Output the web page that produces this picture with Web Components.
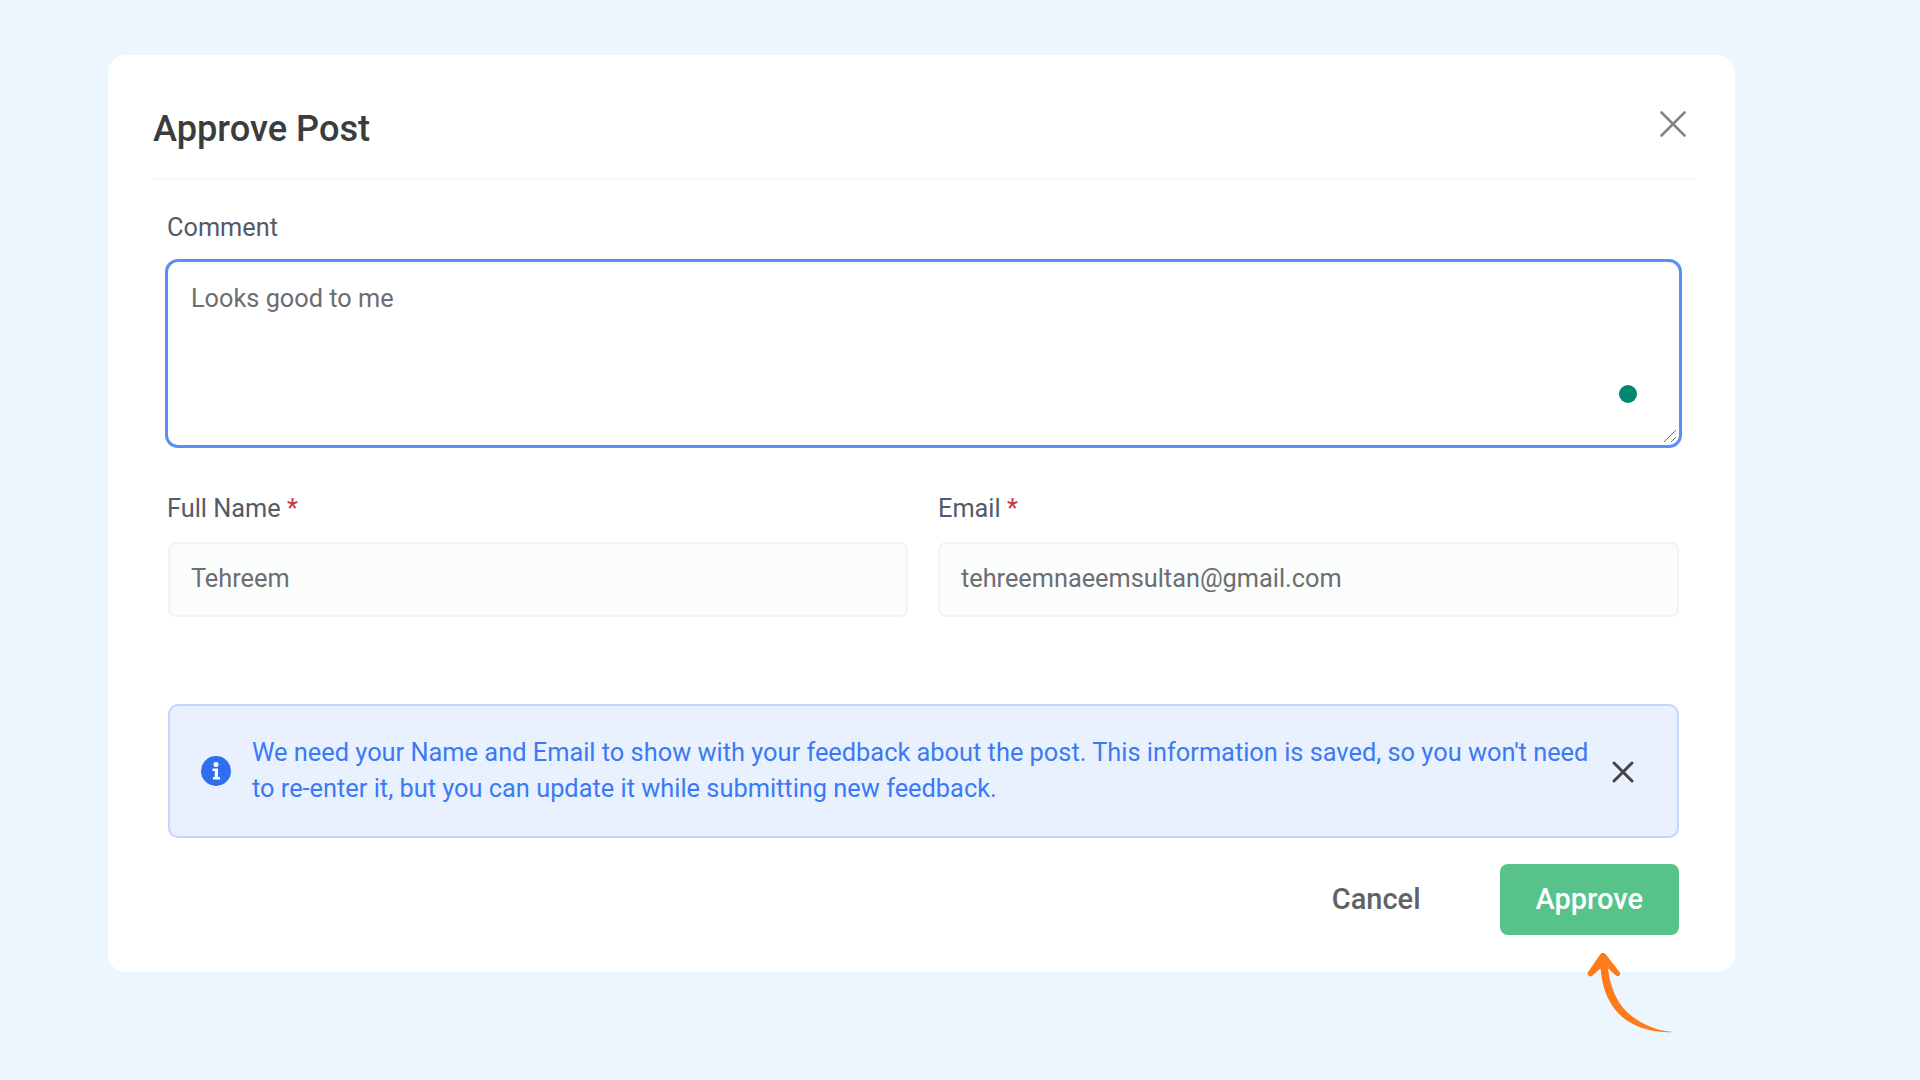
<!DOCTYPE html>
<html lang="en">
<head>
<meta charset="utf-8">
<title>Approve Post</title>
<style>
html, body { margin: 0; height: 100%; }
body { background: #edf5fe; font-family: Roboto, "Liberation Sans", sans-serif; overflow: hidden; }
</style>
</head>
<body>
<approve-page>
  <approve-modal heading="Approve Post">
    <comment-box label="Comment">Looks good to me</comment-box>
    <div slot="fields">
      <text-field label="Full Name" required>Tehreem</text-field>
      <text-field label="Email" required>tehreemnaeemsultan@gmail.com</text-field>
    </div>
    <info-alert slot="alert">We need your Name and Email to show with your feedback about the post. This information is saved, so you won't need to re-enter it, but you can update it while submitting new feedback.</info-alert>
    <action-button slot="actions">Cancel</action-button>
    <action-button slot="actions" primary>Approve</action-button>
  </approve-modal>
</approve-page>

<script>
'use strict';

(function() {

class ApprovePageElement extends HTMLElement {
  constructor() {
    super();
    const root = this.attachShadow({mode: 'open'});
    root.innerHTML = `
<style>
:host {
  display: block;
  position: relative;
  width: 1920px;
  height: 1080px;
  box-sizing: border-box;
  padding: 55px 185px 0 108px;
}
svg {
  position: absolute;
  left: 1580px;
  top: 948px;
}
</style>
<slot></slot>
<svg width="100" height="90" viewBox="0 0 100 90" fill="#ff7a1a">
  <path d="M23 5 C22 5 21 5.500 20.500 6 L8 24 C6.500 27 9.500 29.500 12 28 L20.500 20.500 C22 36 26 52 38 65 C49 77 70 85.500 93 84 C72 82.500 53 72 42.500 59 C33.500 48 29.500 33 28 20.500 L36 27.500 C38.500 29.500 41.500 26.500 39.500 24 L25.500 6 C24.800 5.300 24 5 23 5 Z"/>
</svg>
`;
  }
}

class ApproveModalElement extends HTMLElement {
  constructor() {
    super();
    const root = this.attachShadow({mode: 'open'});
    root.innerHTML = `
<style>
:host {
  display: block;
  background: #fff;
  border-radius: 18px;
  padding: 1px 41px 37px 45px;
}
header {
  display: flex;
  justify-content: space-between;
  height: 122px;
  border-bottom: 2px solid #f5f6f7;
}
h2 {
  margin: 45px 0 0;
  font: 500 36.200px/56px Roboto, sans-serif;
  color: #3a3c3e;
}
.close {
  width: 26px;
  height: 26px;
  margin: 55px 8px 0 0;
}
main {
  padding: 0 15px;
}
::slotted([slot=fields]) {
  display: grid;
  grid-template-columns: 740px 741px;
  gap: 30px;
  margin-top: 46px;
}
::slotted([slot=alert]) {
  margin-top: 87px;
}
.actions {
  display: flex;
  justify-content: flex-end;
  align-items: center;
  margin-top: 26px;
}
</style>
<header>
  <h2></h2>
  <svg class="close" viewBox="0 0 26 26" fill="none" stroke="#858585" stroke-width="2.600" stroke-linecap="round">
    <path d="M1.500 1.500 L24.500 24.500 M24.500 1.500 L1.500 24.500"/>
  </svg>
</header>
<main>
  <slot></slot>
  <slot name="fields"></slot>
  <slot name="alert"></slot>
  <div class="actions"><slot name="actions"></slot></div>
</main>
`;
    root.querySelector('h2').textContent = this.getAttribute('heading');
  }
}

class CommentBoxElement extends HTMLElement {
  constructor() {
    super();
    const root = this.attachShadow({mode: 'open'});
    root.innerHTML = `
<style>
:host {
  display: block;
}
label {
  display: block;
  margin: 34px 0 0 -1px;
  font: 400 25.300px/28px Roboto, sans-serif;
  color: #525b69;
}
.box {
  position: relative;
  box-sizing: border-box;
  height: 189px;
  margin-top: 17px;
  margin-left: -3px;
  width: 1517px;
  padding: 21px 23px 19px;
  border: 3px solid #5b8ff5;
  border-radius: 13px;
  font: 400 25.300px/32px Roboto, sans-serif;
  color: #6b6e72;
}
.dot {
  position: absolute;
  right: 42px;
  bottom: 42px;
  width: 18px;
  height: 18px;
  border-radius: 50%;
  background: #00876f;
}
.grip {
  position: absolute;
  right: 2px;
  bottom: 2px;
}
</style>
<label></label>
<div class="box">
  <slot></slot>
  <span class="dot"></span>
  <svg class="grip" width="14" height="14" viewBox="0 0 14 14" fill="none" stroke="#6f6f6f" stroke-width="1">
    <path d="M1 13 L13 1 M8 13 L13 8"/>
  </svg>
</div>
`;
    root.querySelector('label').textContent = this.getAttribute('label');
  }
}

class TextFieldElement extends HTMLElement {
  constructor() {
    super();
    const root = this.attachShadow({mode: 'open'});
    root.innerHTML = `
<style>
:host {
  display: block;
}
label {
  display: block;
  margin: 1px 0 0 -1px;
  font: 400 25.300px/28px Roboto, sans-serif;
  color: #525b69;
}
:host(:last-child) label {
  margin-left: 0;
}
b {
  font-weight: 400;
  color: #c8324f;
}
.input {
  box-sizing: border-box;
  height: 75px;
  margin-top: 19px;
  padding: 0 21px;
  border: 2px solid #f2f3f4;
  border-radius: 8px;
  background: #fbfcfc;
  font: 400 25.300px/70px Roboto, sans-serif;
  color: #6b6e72;
}
</style>
<label><span></span> <b>*</b></label>
<div class="input"><slot></slot></div>
`;
    root.querySelector('span').textContent = this.getAttribute('label');
    if (!this.hasAttribute('required')) {
      root.querySelector('b').remove();
    }
  }
}

class InfoAlertElement extends HTMLElement {
  constructor() {
    super();
    const root = this.attachShadow({mode: 'open'});
    root.innerHTML = `
<style>
:host {
  display: flex;
  align-items: center;
  box-sizing: border-box;
  height: 134px;
  padding: 0 43px 0 31px;
  background: #e9f1ff;
  border: 2px solid #c2d7fb;
  border-radius: 10px;
  font: 400 25.370px/36px Roboto, sans-serif;
  color: #3b7af5;
}
.info {
  flex: none;
  width: 30px;
  height: 30px;
  margin-right: 21px;
}
.text {
  flex: 1;
  margin-bottom: 3px;
}
.close {
  flex: none;
  width: 22px;
  height: 22px;
  margin: 2px 0 0 14px;
}
</style>
<svg class="info" viewBox="0 0 30 30">
  <circle cx="15" cy="15" r="15" fill="#2f6fed"/>
  <circle cx="15" cy="8.500" r="2.500" fill="#fff"/>
  <path d="M11.500 12.500 H17 V21 H19 V23.500 H12 V21 H13.800 V15 H11.500 Z" fill="#fff"/>
</svg>
<div class="text"><slot></slot></div>
<svg class="close" viewBox="0 0 22 22" fill="none" stroke="#454545" stroke-width="3" stroke-linecap="round">
  <path d="M2 2 L20 20 M20 2 L2 20"/>
</svg>
`;
  }
}

class ActionButtonElement extends HTMLElement {
  constructor() {
    super();
    const root = this.attachShadow({mode: 'open'});
    root.innerHTML = `
<style>
:host {
  display: block;
  box-sizing: border-box;
  height: 71px;
  padding: 0 36px;
  border-radius: 8px;
  font: 500 29px/70px Roboto, sans-serif;
  color: #5f6368;
}
:host([primary]) {
  background: #57c38a;
  color: #fff;
  margin-left: 43px;
}
</style>
<slot></slot>
`;
  }
}

customElements.define('approve-page', ApprovePageElement);
customElements.define('approve-modal', ApproveModalElement);
customElements.define('comment-box', CommentBoxElement);
customElements.define('text-field', TextFieldElement);
customElements.define('info-alert', InfoAlertElement);
customElements.define('action-button', ActionButtonElement);

}());
</script>
</body>
</html>
